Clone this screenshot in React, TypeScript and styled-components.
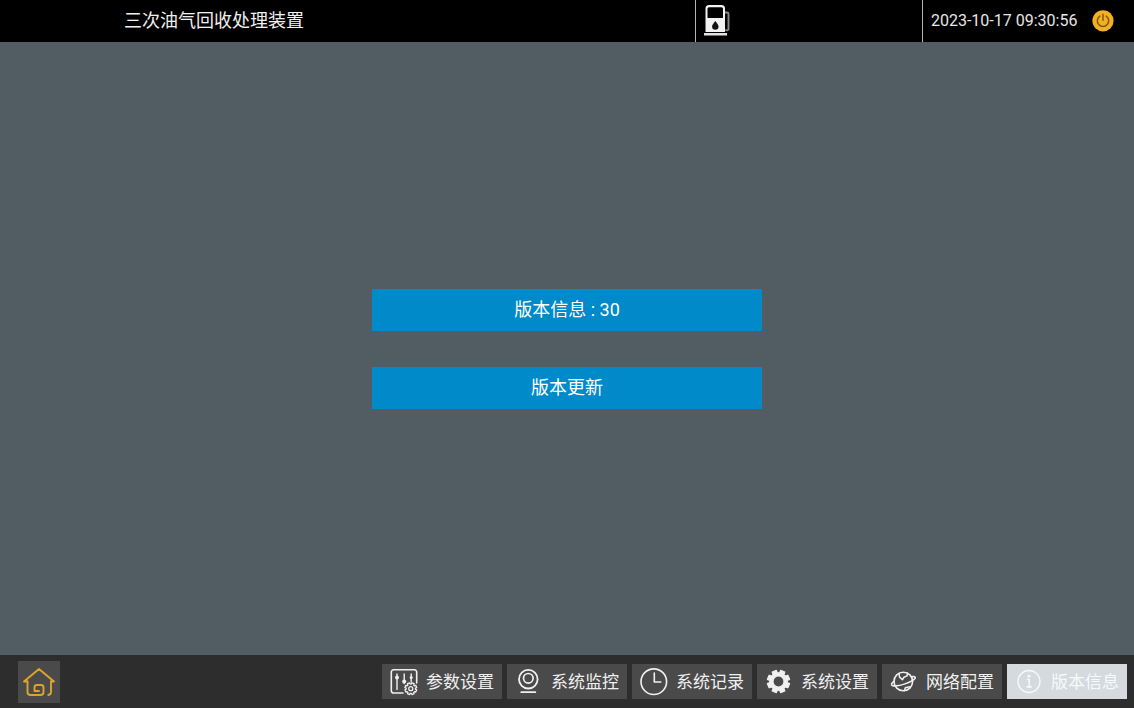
import React from 'react';
import styled, { createGlobalStyle } from 'styled-components';

const GlobalStyle = createGlobalStyle`
  *, *::before, *::after { box-sizing: border-box; }
  body {
    margin: 0;
    background: #525d63;
    color: #fff;
    font-family: Roboto, "Noto Sans CJK SC", sans-serif;
  }
  button { font: inherit; color: inherit; border: 0; cursor: pointer; }
`;

const Page = styled.div`
  display: flex;
  flex-direction: column;
  min-height: 100vh;
`;

const Header = styled.header`
  display: flex;
  min-height: 42px;
  background: #000;
`;

const Title = styled.h1`
  flex: 1;
  align-self: center;
  margin: 0;
  padding-left: 124px;
  font-size: 18px;
  line-height: 24px;
  font-weight: 400;
  color: #f0f0f0;
`;

const HeaderCell = styled.div<{ $width: number }>`
  display: flex;
  align-items: center;
  justify-content: space-between;
  width: ${({ $width }) => $width}%;
  padding: 0 20px 0 8px;
  border-left: 1px solid #b4b4b4;
`;

const Clock = styled.time`
  font-size: 16px;
  line-height: 24px;
  color: #e6e6e6;
  white-space: nowrap;
`;

const PowerButton = styled.button`
  display: flex;
  padding: 0;
  background: none;
`;

const Main = styled.main`
  flex: 1;
  display: flex;
  flex-direction: column;
  align-items: center;
  justify-content: center;
  gap: 36px;
`;

const ActionButton = styled.button`
  width: 390px;
  max-width: 100%;
  padding: 9px 16px;
  background: #008aca;
  font-size: 18px;
  line-height: 24px;
`;

const Footer = styled.footer`
  display: flex;
  align-items: center;
  justify-content: space-between;
  min-height: 53px;
  padding: 0 7px 0 18px;
  background: #2d2d2d;
`;

const HomeButton = styled.button`
  display: flex;
  padding: 0;
  background: #4a4a4a;
`;

const Tabs = styled.nav`
  display: flex;
  gap: 5px;
`;

const Tab = styled.button<{ $active: boolean }>`
  display: flex;
  align-items: center;
  gap: 8px;
  width: 120px;
  height: 35px;
  padding: 0 0 0 8px;
  background: ${({ $active }) => ($active ? '#d5dade' : '#4a4a4a')};
  color: ${({ $active }) => ($active ? '#f7f9fa' : '#f0f0f0')};
  font-size: 17px;
  line-height: 24px;
  white-space: nowrap;
`;

const Icon = styled.svg`
  display: block;
  flex: none;
  fill: none;
  stroke: currentColor;
  stroke-width: 1.6;
  stroke-linecap: round;
  stroke-linejoin: round;
`;

const gearPath = (cx: number, cy: number, outer: number, inner: number) => {
  const points: string[] = [];
  for (let i = 0; i < 8; i += 1) {
    const mid = (i * Math.PI) / 4 + Math.PI / 8;
    [[-0.27, inner], [-0.2, outer], [0.2, outer], [0.27, inner]].forEach(([d, r]) => {
      points.push(`${(cx + r * Math.cos(mid + d)).toFixed(2)} ${(cy + r * Math.sin(mid + d)).toFixed(2)}`);
    });
  }
  return `M${points.join('L')}Z`;
};

const TabIcon = ({ children }: { children: React.ReactNode }) => (
  <Icon width="28" height="28" viewBox="0 0 28 28" aria-hidden="true">{children}</Icon>
);

const ParamsIcon = () => (
  <TabIcon>
    <path d="M13 25H3.500A2.200 2.200 0 0 1 1.300 22.800V4a2.200 2.200 0 0 1 2.200-2.200h21A2.200 2.200 0 0 1 26.700 4v11" />
    <path d="M7 6v15.500M14.200 6v9.500M21.200 6v8" strokeWidth="1.400" />
    <g fill="currentColor" stroke="none">
      <circle cx="7" cy="9.500" r="2" />
      <circle cx="14.200" cy="13.500" r="2" />
      <circle cx="21.200" cy="9.500" r="1.500" />
    </g>
    <path d={gearPath(20.8, 20.7, 6, 4.7)} fill="#4a4a4a" strokeWidth="1.300" />
    <circle cx="20.800" cy="20.700" r="2" strokeWidth="1.300" />
  </TabIcon>
);

const MonitorIcon = () => (
  <TabIcon>
    <circle cx="13.300" cy="11.200" r="9.300" strokeWidth="1.800" />
    <circle cx="13.300" cy="10.300" r="4.800" strokeWidth="1.700" />
    <path d="M6.300 24.200h14" strokeWidth="1.800" />
  </TabIcon>
);

const RecordIcon = () => (
  <TabIcon>
    <circle cx="13.800" cy="13.700" r="12.800" />
    <path d="M14.300 5v9h6.500" />
  </TabIcon>
);

const SettingsIcon = () => (
  <TabIcon>
    <path
      fill="currentColor"
      fillRule="evenodd"
      strokeWidth="1.200"
      d={`${gearPath(13.5, 13.5, 11.3, 8.8)}M19 13.500a5.500 5.500 0 1 0-11 0a5.500 5.500 0 1 0 11 0Z`}
    />
  </TabIcon>
);

const NetworkIcon = () => (
  <TabIcon>
    <circle cx="13.300" cy="13.500" r="9.300" />
    <path d="M4.200 13.200C2.300 14.600 1.200 15.900 1.600 16.800c.8 1.600 6.300 1.300 12.600-.7S25.800 11 25.300 9.500c-.3-.9-1.700-1.100-3.900-.8" strokeWidth="1.500" />
    <path d="M9 5.500l.6 3.600 2.800 2.700 1.500-2.600 3.200-1.300.3-2.900M14.500 22.500l.8-2.800 4.200-1" strokeWidth="1.500" />
  </TabIcon>
);

const InfoIcon = () => (
  <TabIcon>
    <circle cx="14" cy="13.500" r="11" strokeWidth="1.300" />
    <path d="M12.500 11.500h1.700v7.200M12.200 18.900h4" strokeWidth="1.600" />
    <circle cx="13.900" cy="8.200" r="1.400" fill="currentColor" stroke="none" />
  </TabIcon>
);

const HomeIcon = () => (
  <Icon width="42" height="42" viewBox="0 0 42 42" aria-hidden="true">
    <g stroke="#dfa32c" strokeWidth="1.900">
      <path d="M9.500 20.500H6L21 8 36 20.500h-3" />
      <path d="M9.500 20.500V31a3 3 0 0 0 3 3H22.500a3 3 0 0 0 3-3V26.500A2.500 2.500 0 0 0 23 24H19a2.500 2.500 0 0 0-2.500 2.500V30h4.500" />
      <path d="M33 20.500V31q0 2.500-2.700 3" />
    </g>
  </Icon>
);

const PumpIcon = () => (
  <Icon width="26" height="34" viewBox="0 0 26 34" role="img" aria-label="油枪">
    <path d="M21 8.500h2a1.500 1.500 0 0 1 1.500 1.500v15.500q-1 1.500-2.500.5" stroke="#858585" strokeWidth="1.900" />
    <path fill="#f2f2f2" stroke="none" fillRule="evenodd" d="M5 1h12.500a3.500 3.500 0 0 1 3.500 3.500V28h-19.500V4.500A3.500 3.500 0 0 1 5 1ZM5 3.300A1.500 1.500 0 0 0 3.500 4.800V14H19V4.800A1.500 1.500 0 0 0 17.500 3.300Z" />
    <path d="M11.300 17c2 2.500 3.200 4 3.200 5.500a3.200 3.200 0 0 1-6.400 0c0-1.500 1.200-3 3.200-5.500Z" fill="#111" stroke="none" />
    <path d="M0 29h23v2.500H0Z" fill="#e2e2e2" stroke="none" />
  </Icon>
);

const PowerIcon = () => (
  <Icon width="22" height="22" viewBox="0 0 22 22" aria-hidden="true">
    <circle cx="11" cy="10.800" r="10.600" fill="#f1b122" stroke="none" />
    <path d="M7.800 6.100a5.700 5.700 0 1 0 6.400 0M11 4.300v6" stroke="#7c5a14" strokeWidth="1.500" />
  </Icon>
);

const tabs = [
  { label: '参数设置', Glyph: ParamsIcon },
  { label: '系统监控', Glyph: MonitorIcon },
  { label: '系统记录', Glyph: RecordIcon },
  { label: '系统设置', Glyph: SettingsIcon },
  { label: '网络配置', Glyph: NetworkIcon },
  { label: '版本信息', Glyph: InfoIcon },
];

export default function App() {
  const [active, setActive] = React.useState('版本信息');
  return (
    <Page lang="zh-CN">
      <GlobalStyle />
      <Header>
        <Title>三次油气回收处理装置</Title>
        <HeaderCell $width={20}>
          <PumpIcon />
        </HeaderCell>
        <HeaderCell $width={18.7}>
          <Clock dateTime="2023-10-17T09:30:56">2023-10-17 09:30:56</Clock>
          <PowerButton type="button" aria-label="电源">
            <PowerIcon />
          </PowerButton>
        </HeaderCell>
      </Header>
      <Main>
        <ActionButton type="button">版本信息 : 30</ActionButton>
        <ActionButton type="button">版本更新</ActionButton>
      </Main>
      <Footer>
        <HomeButton type="button" aria-label="首页">
          <HomeIcon />
        </HomeButton>
        <Tabs>
          {tabs.map(({ label, Glyph }) => (
            <Tab
              key={label}
              type="button"
              $active={label === active}
              aria-current={label === active ? 'page' : undefined}
              onClick={() => setActive(label)}
            >
              <Glyph />
              {label}
            </Tab>
          ))}
        </Tabs>
      </Footer>
    </Page>
  );
}
